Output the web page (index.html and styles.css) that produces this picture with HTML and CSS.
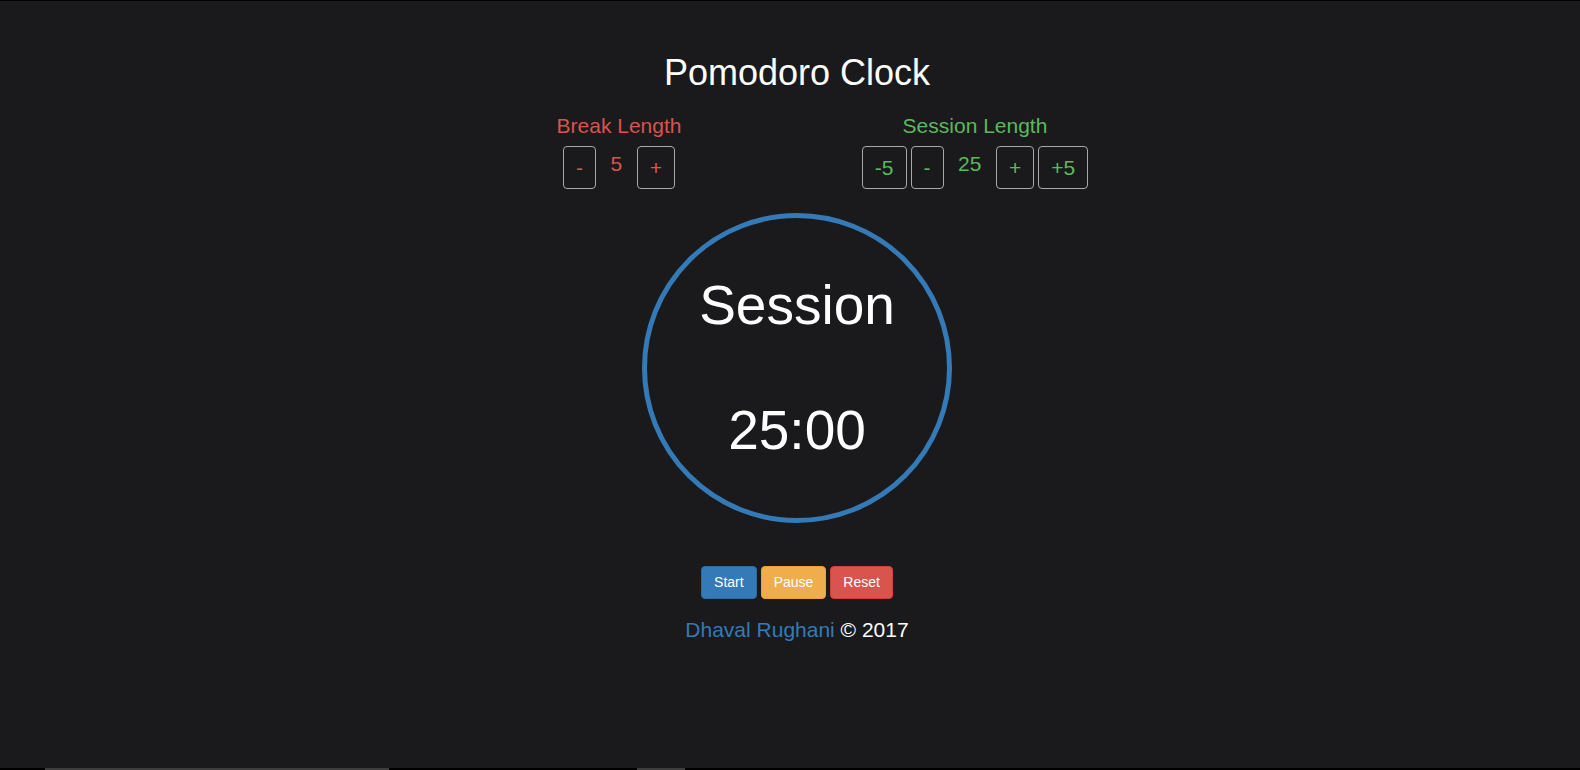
FILE: index.html
```html
<!DOCTYPE html>
<html lang="en">
<head>
<meta charset="utf-8">
<title>Pomodoro Clock</title>
<link rel="stylesheet" href="styles.css">
</head>
<body>
  <main class="app">
    <h1 class="title">Pomodoro Clock</h1>
    <div class="settings">
      <section class="setting setting-break">
        <div class="setting-label">Break Length</div>
        <div class="setting-controls">
          <button class="ctrl">-</button>
          <span class="value">5</span>
          <button class="ctrl">+</button>
        </div>
      </section>
      <section class="setting setting-session">
        <div class="setting-label">Session Length</div>
        <div class="setting-controls">
          <button class="ctrl">-5</button>
          <button class="ctrl">-</button>
          <span class="value">25</span>
          <button class="ctrl">+</button>
          <button class="ctrl">+5</button>
        </div>
      </section>
    </div>
    <div class="clock">
      <div class="clock-mode">Session</div>
      <div class="clock-time">25:00</div>
    </div>
    <div class="actions">
      <button class="btn btn-start">Start</button>
      <button class="btn btn-pause">Pause</button>
      <button class="btn btn-reset">Reset</button>
    </div>
    <p class="credit"><a class="credit-link" href="#">Dhaval Rughani</a> © 2017</p>
  </main>
  <div class="bottom-strip">
    <span class="strip-bar strip-bar-a"></span>
    <span class="strip-bar strip-bar-b"></span>
  </div>
</body>
</html>
```

FILE: styles.css
```css
html, body {
  margin: 0;
  padding: 0;
}

body {
  box-sizing: border-box;
  height: 100vh;
  background: #1a1a1c;
  border-top: 1px solid #000;
  color: #fff;
  font-family: "Liberation Sans", Arial, sans-serif;
  display: flex;
  flex-direction: column;
  overflow: hidden;
}

.app {
  flex: 1;
  display: flex;
  flex-direction: column;
  align-items: center;
  padding-left: 14px;
}

.title {
  margin: 52px 0 0;
  font-size: 36px;
  line-height: 40px;
  font-weight: 400;
}

.settings {
  display: flex;
  width: 712px;
  margin-top: 21px;
}

.setting {
  flex: 1;
  display: flex;
  flex-direction: column;
  align-items: center;
}

.setting-break { color: #d9534f; }
.setting-session { color: #5cb85c; }

.setting-label {
  font-size: 21px;
  line-height: 24px;
}

.setting-controls {
  display: flex;
  align-items: flex-start;
  gap: 4px;
  margin-top: 8px;
}

.ctrl {
  font-family: inherit;
  font-size: 21px;
  line-height: 29px;
  color: inherit;
  background: transparent;
  border: 1px solid #a8a8a8;
  border-radius: 4px;
  padding: 6px 12px;
  margin: 0;
}

.value {
  font-size: 21px;
  line-height: 24px;
  padding-top: 6px;
  margin: 0 10.5px;
}

.clock {
  box-sizing: border-box;
  width: 310px;
  height: 310px;
  margin-top: 24px;
  border: 5px solid #337ab7;
  border-radius: 50%;
  display: flex;
  flex-direction: column;
  align-items: center;
  padding-top: 55px;
  font-size: 55px;
  line-height: 64px;
}

.clock-time {
  margin-top: 61px;
}

.actions {
  display: flex;
  gap: 4px;
  margin-top: 43px;
}

.btn {
  font-family: inherit;
  font-size: 14px;
  line-height: 19px;
  color: #fff;
  padding: 6px 12px;
  border: 1px solid transparent;
  border-radius: 4px;
  margin: 0;
}

.btn-start { background: #337ab7; border-color: #2e6da4; }
.btn-pause { background: #f0ad4e; border-color: #eea236; }
.btn-reset { background: #d9534f; border-color: #d43f3a; }

.credit {
  margin: 19px 0 0;
  font-size: 21px;
  line-height: 24px;
}

.credit-link {
  color: #337ab7;
  text-decoration: none;
}

.bottom-strip {
  height: 2px;
  background: #000;
  display: flex;
}

.strip-bar {
  height: 2px;
  background: #3d3d3d;
}

.strip-bar-a {
  width: 344px;
  margin-left: 45px;
}

.strip-bar-b {
  width: 48px;
  margin-left: 248px;
}
```
